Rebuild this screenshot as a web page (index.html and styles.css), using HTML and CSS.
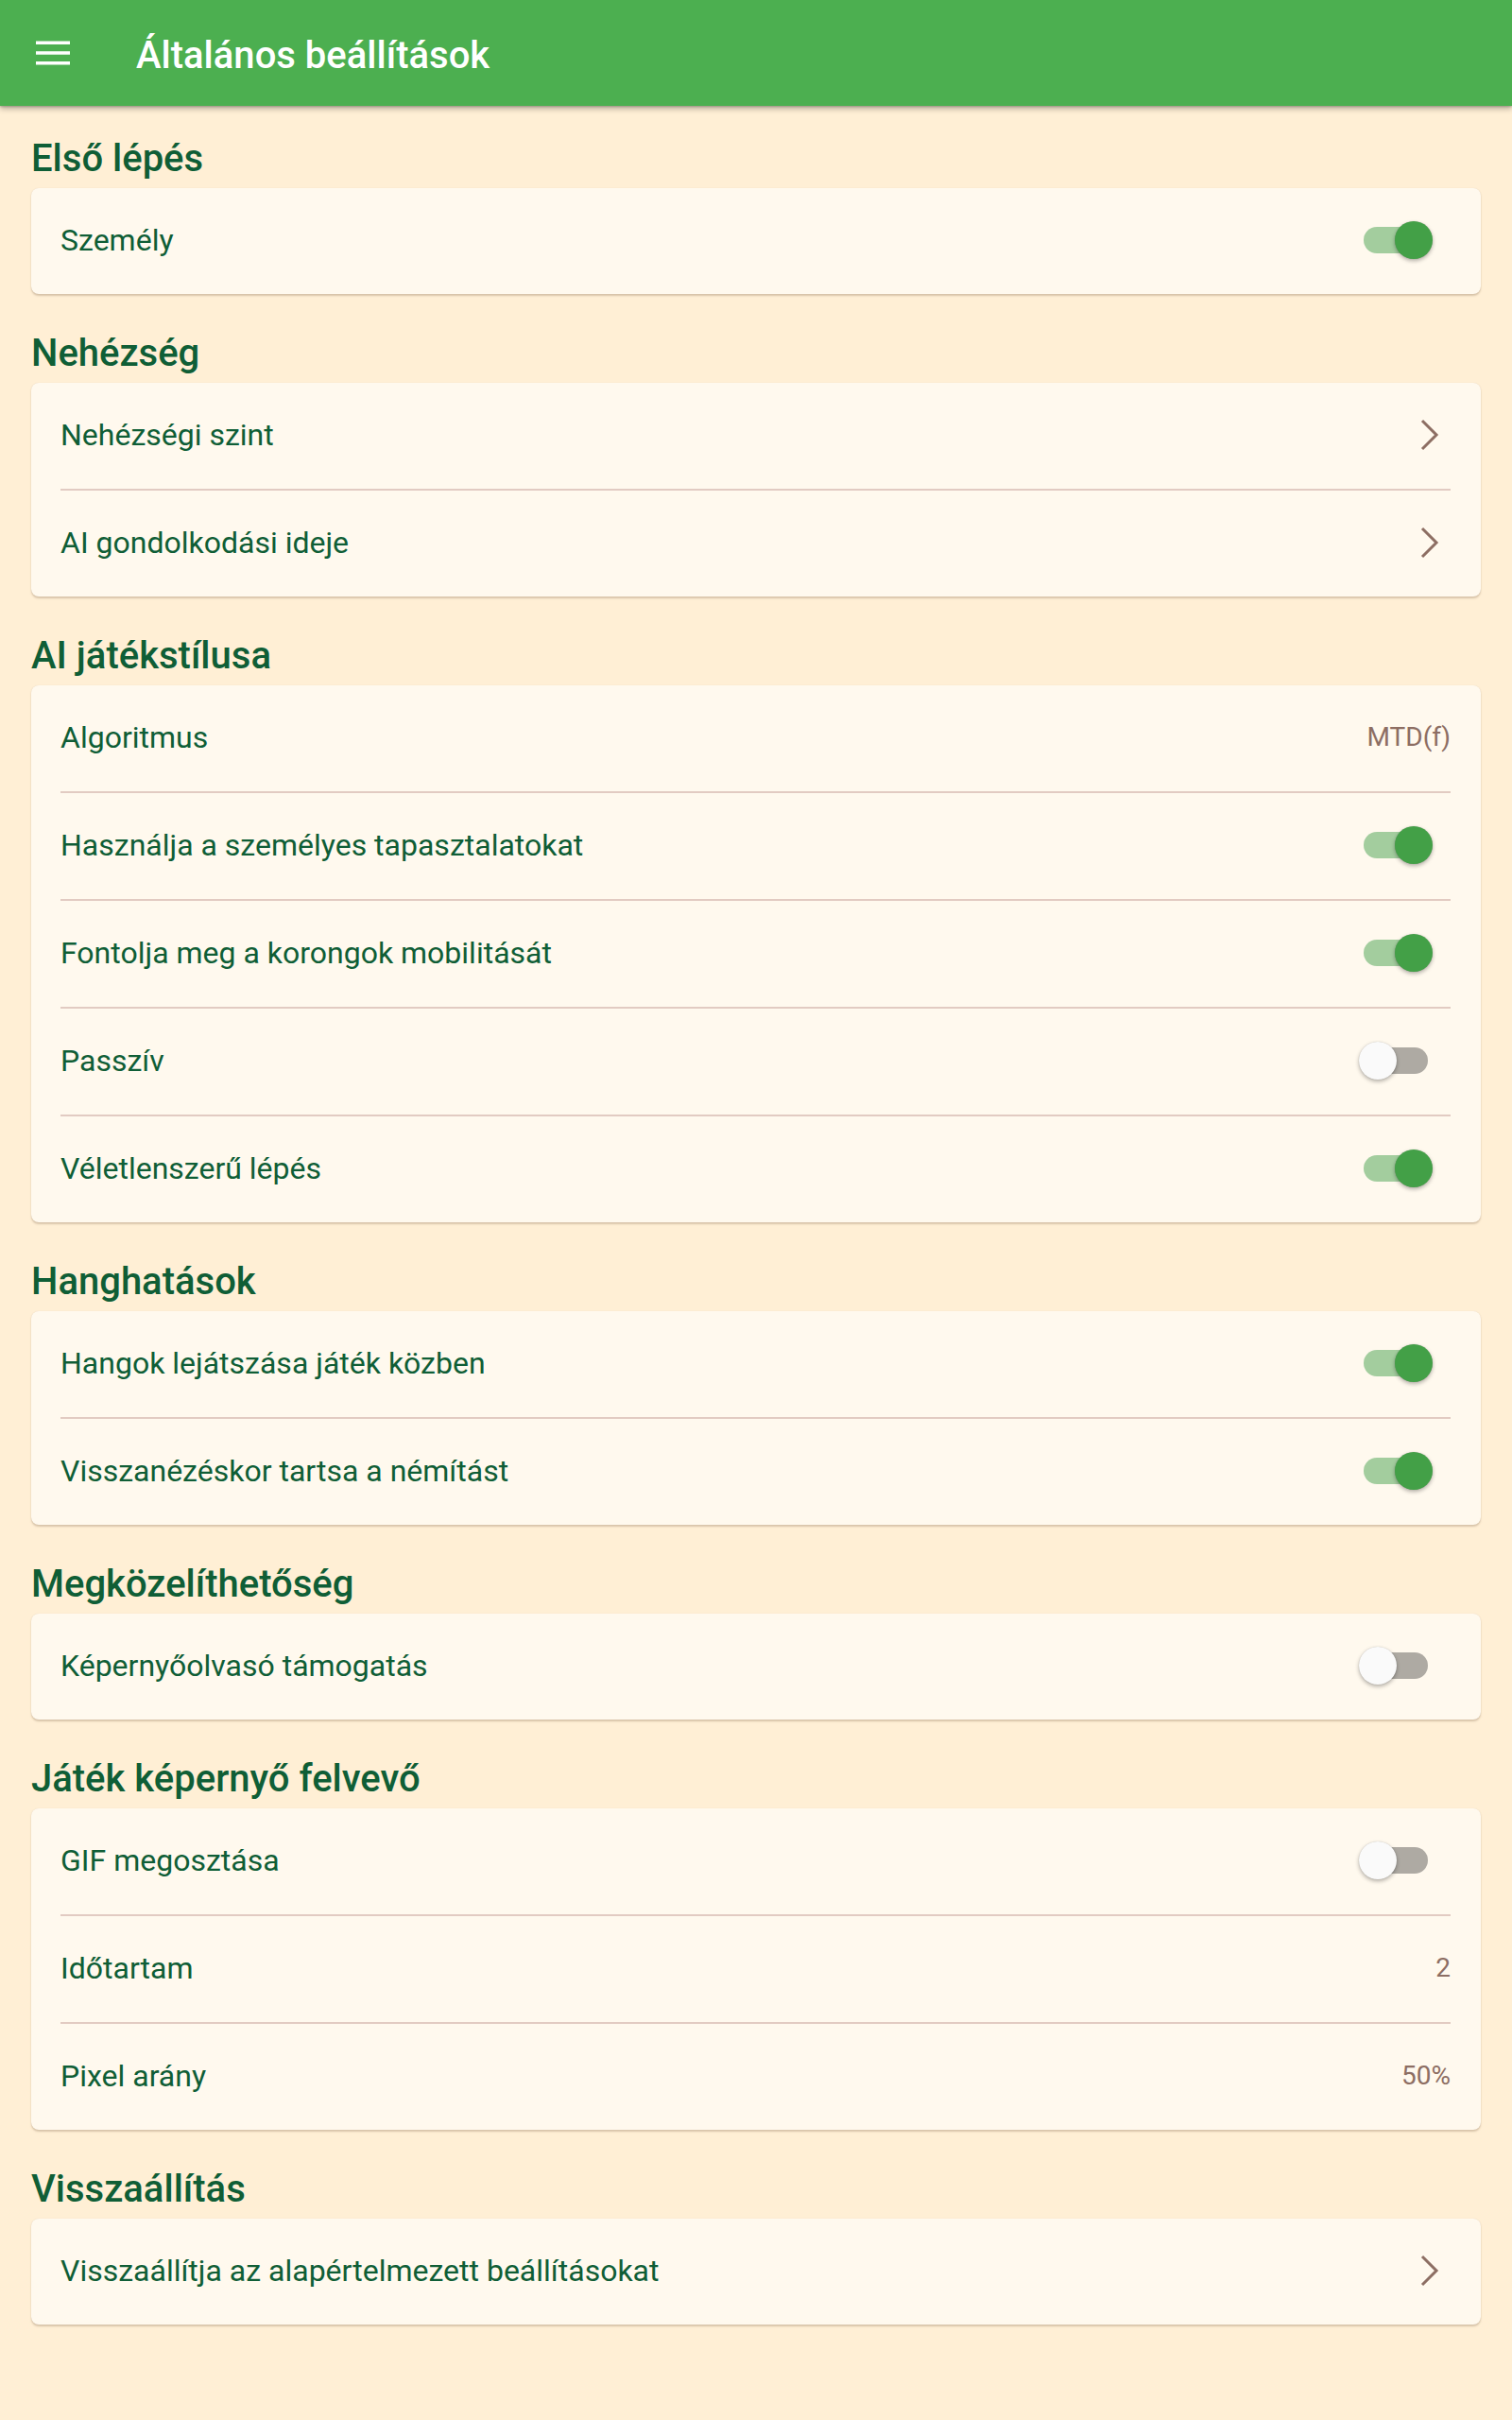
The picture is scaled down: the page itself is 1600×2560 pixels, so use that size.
FILE: index.html
```html
<!DOCTYPE html>
<html lang="hu">
<head>
<meta charset="utf-8">
<title>Általános beállítások</title>
<link rel="stylesheet" href="styles.css">
</head>
<body>
<header class="appbar">
  <svg class="menu-icon" width="36" height="26" viewBox="0 0 36 26" aria-hidden="true">
    <rect x="0" y="0.5" width="36" height="3.5" fill="#fff"/>
    <rect x="0" y="11.25" width="36" height="3.5" fill="#fff"/>
    <rect x="0" y="22" width="36" height="3.5" fill="#fff"/>
  </svg>
  <h1 class="appbar-title">Általános beállítások</h1>
</header>

<main class="content">
  <section class="group">
    <h2 class="group-title">Első lépés</h2>
    <div class="card">
      <div class="row"><span class="label">Személy</span><span class="switch on"><span class="track"></span><span class="thumb"></span></span></div>
    </div>
  </section>

  <section class="group">
    <h2 class="group-title">Nehézség</h2>
    <div class="card">
      <div class="row"><span class="label">Nehézségi szint</span><svg class="chevron" width="20" height="34" viewBox="0 0 20 34"><path d="M2 2 L17 17 L2 32" fill="none" stroke="#8d6e63" stroke-width="3"/></svg></div>
      <div class="divider"></div>
      <div class="row"><span class="label">AI gondolkodási ideje</span><svg class="chevron" width="20" height="34" viewBox="0 0 20 34"><path d="M2 2 L17 17 L2 32" fill="none" stroke="#8d6e63" stroke-width="3"/></svg></div>
    </div>
  </section>

  <section class="group">
    <h2 class="group-title">AI játékstílusa</h2>
    <div class="card">
      <div class="row"><span class="label">Algoritmus</span><span class="value value-alt">MTD(f)</span></div>
      <div class="divider"></div>
      <div class="row"><span class="label">Használja a személyes tapasztalatokat</span><span class="switch on"><span class="track"></span><span class="thumb"></span></span></div>
      <div class="divider"></div>
      <div class="row"><span class="label">Fontolja meg a korongok mobilitását</span><span class="switch on"><span class="track"></span><span class="thumb"></span></span></div>
      <div class="divider"></div>
      <div class="row"><span class="label">Passzív</span><span class="switch"><span class="track"></span><span class="thumb"></span></span></div>
      <div class="divider"></div>
      <div class="row"><span class="label">Véletlenszerű lépés</span><span class="switch on"><span class="track"></span><span class="thumb"></span></span></div>
    </div>
  </section>

  <section class="group">
    <h2 class="group-title">Hanghatások</h2>
    <div class="card">
      <div class="row"><span class="label">Hangok lejátszása játék közben</span><span class="switch on"><span class="track"></span><span class="thumb"></span></span></div>
      <div class="divider"></div>
      <div class="row"><span class="label">Visszanézéskor tartsa a némítást</span><span class="switch on"><span class="track"></span><span class="thumb"></span></span></div>
    </div>
  </section>

  <section class="group">
    <h2 class="group-title">Megközelíthetőség</h2>
    <div class="card">
      <div class="row"><span class="label">Képernyőolvasó támogatás</span><span class="switch"><span class="track"></span><span class="thumb"></span></span></div>
    </div>
  </section>

  <section class="group">
    <h2 class="group-title">Játék képernyő felvevő</h2>
    <div class="card">
      <div class="row"><span class="label">GIF megosztása</span><span class="switch"><span class="track"></span><span class="thumb"></span></span></div>
      <div class="divider"></div>
      <div class="row"><span class="label">Időtartam</span><span class="value">2</span></div>
      <div class="divider"></div>
      <div class="row"><span class="label">Pixel arány</span><span class="value">50%</span></div>
    </div>
  </section>

  <section class="group">
    <h2 class="group-title">Visszaállítás</h2>
    <div class="card">
      <div class="row"><span class="label">Visszaállítja az alapértelmezett beállításokat</span><svg class="chevron" width="20" height="34" viewBox="0 0 20 34"><path d="M2 2 L17 17 L2 32" fill="none" stroke="#8d6e63" stroke-width="3"/></svg></div>
    </div>
  </section>
</main>
</body>
</html>
```

FILE: styles.css
```css
* { box-sizing: border-box; }

html, body {
  margin: 0;
  padding: 0;
}

body {
  background: #ffefd5;
  font-family: Roboto, "Noto Sans", "Liberation Sans", sans-serif;
  color: #0f5e36;
  min-height: 2560px;
}

.appbar {
  position: relative;
  z-index: 2;
  height: 112px;
  background: #4caf50;
  display: flex;
  align-items: center;
  padding-left: 38px;
  box-shadow: 0 3px 6px rgba(0, 0, 0, 0.28), 0 1px 2px rgba(0, 0, 0, 0.2);
}

.menu-icon {
  display: block;
  flex: none;
}

.appbar-title {
  margin: 6px 0 0 70px;
  font-size: 40px;
  font-weight: 500;
  color: #ffffff;
  line-height: 48px;
  letter-spacing: 0;
}

.content {
  padding: 32px 33px 0;
  display: flex;
  flex-direction: column;
  gap: 39px;
}

.group-title {
  margin: 0 0 7px;
  font-size: 40px;
  font-weight: 500;
  line-height: 48px;
  color: #0f5e36;
}

.card {
  background: #fff9ee;
  border-radius: 8px;
  box-shadow: 0 2px 2px rgba(120, 90, 60, 0.28), 0 0 1px rgba(120, 90, 60, 0.18);
}

.row {
  height: 112px;
  padding: 0 32px 2px 31px;
  display: flex;
  align-items: center;
  justify-content: space-between;
}

.label {
  font-size: 32px;
  line-height: 40px;
  color: #0f5e36;
}

.value {
  font-size: 28px;
  line-height: 36px;
  color: #8d6e63;
}

.divider {
  height: 2px;
  margin: 0 32px 0 31px;
  background: #e2cbc2;
}

.chevron {
  display: block;
  margin-right: 12px;
}

.switch {
  position: relative;
  width: 78px;
  height: 40px;
  margin-right: 19px;
  flex: none;
}

.switch .track {
  position: absolute;
  left: 5px;
  top: 6px;
  width: 68px;
  height: 28px;
  border-radius: 14px;
  background: #aeaaa3;
}

.switch .thumb {
  position: absolute;
  left: 0;
  top: 0;
  width: 40px;
  height: 40px;
  border-radius: 50%;
  background: #fafafa;
  box-shadow: 0 2px 4px rgba(0, 0, 0, 0.3), 0 0 1px rgba(0, 0, 0, 0.2);
}

.switch.on .track {
  background: #a3cd9e;
}

.switch.on .thumb {
  left: auto;
  right: 0;
  background: #43a047;
}
```
